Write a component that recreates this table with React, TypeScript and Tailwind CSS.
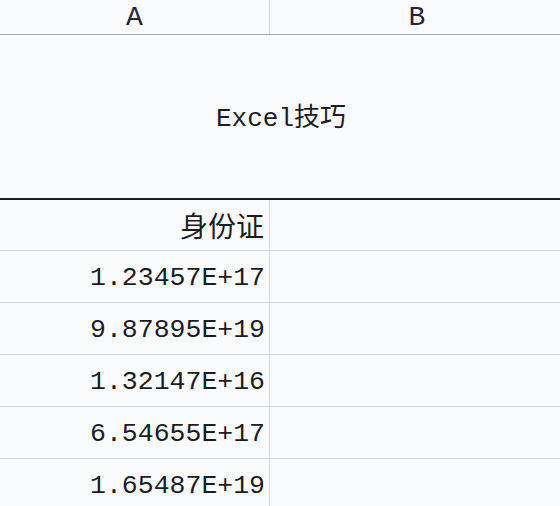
import React from "react";

const mono = { fontFamily: '"Liberation Mono", "Noto Sans CJK SC", monospace' };

const rows = ["1.23457E+17", "9.87895E+19", "1.32147E+16", "6.54655E+17", "1.65487E+19"];

export default function App() {
  return (
    <div className="w-[560px] h-[506px] overflow-hidden bg-[#f9fbfe] text-[#1c1c1f]" style={mono}>
      <div className="flex h-[35px] border-b border-[#a3a6ab] text-[28px] text-[#2a2238]">
        <div className="w-[270px] border-r border-[#d4d7dc] flex items-center justify-center pt-[2px]">A</div>
        <div className="flex-1 flex items-center justify-center pl-[4px] pt-[2px]">B</div>
      </div>
      <div className="h-[163px] flex items-center justify-center text-[26px] pl-[2px] pt-[6px]">Excel技巧</div>
      <div className="h-[2px] bg-[#1e1e22]" />
      <div className="flex h-[51px] border-b border-[#d0d3d8]">
        <div className="w-[270px] border-r border-[#d4d7dc] flex items-center justify-end pr-[5px] text-[28px]" style={{ fontFamily: '"Noto Sans CJK SC", sans-serif' }}>
          身份证
        </div>
        <div className="flex-1" />
      </div>
      {rows.map((r) => (
        <div key={r} className="flex h-[52px] border-b border-[#d0d3d8]">
          <div className="w-[270px] border-r border-[#d4d7dc] flex items-center justify-end pr-[4px] pt-[5px] text-[26.5px]">
            {r}
          </div>
          <div className="flex-1" />
        </div>
      ))}
    </div>
  );
}
